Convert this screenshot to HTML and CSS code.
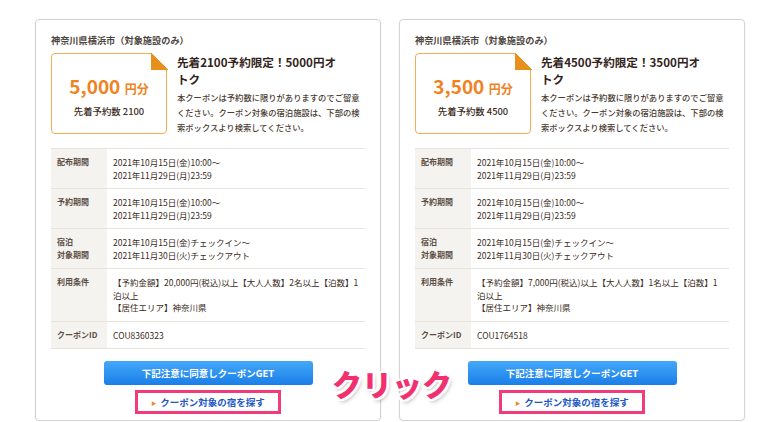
FILE: index.html
```html
<!DOCTYPE html>
<html lang="ja">
<head>
    <meta charset="UTF-8">
    <meta name="viewport" content="width=device-width, initial-scale=1.0">
    <title>クーポン</title>
    <link rel="stylesheet" href="styles.css">
</head>
<body>

    <div class="coupon-list">
        <div class="coupon-card">
            <h3 class="area">神奈川県横浜市（対象施設のみ）</h3>
            <div class="coupon-head">
                <div class="ticket">
                    <p class="amount">5,000 <span>円分</span></p>
                    <p class="limit">先着予約数 2100</p>
                </div>
                <div class="summary">
                    <h2 class="title">先着2100予約限定！5000円オトク</h2>
                    <p class="note">本クーポンは予約数に限りがありますのでご留意ください。クーポン対象の宿泊施設は、下部の検索ボックスより検索してください。</p>
                </div>
            </div>
            <table class="detail">
                <tr>
                    <th>配布期間</th>
                    <td>2021年10月15日(金)10:00〜<br>2021年11月29日(月)23:59</td>
                </tr>
                <tr>
                    <th>予約期間</th>
                    <td>2021年10月15日(金)10:00〜<br>2021年11月29日(月)23:59</td>
                </tr>
                <tr>
                    <th>宿泊<br>対象期間</th>
                    <td>2021年10月15日(金)チェックイン〜<br>2021年11月30日(火)チェックアウト</td>
                </tr>
                <tr>
                    <th>利用条件</th>
                    <td>【予約金額】20,000円(税込)以上【大人人数】2名以上【泊数】1泊以上<br>【居住エリア】神奈川県</td>
                </tr>
                <tr>
                    <th>クーポンID</th>
                    <td>COU8360323</td>
                </tr>
            </table>
            <button class="get-btn" type="button">下記注意に同意しクーポンGET</button>
            <a class="search-link" href="#"><span class="arrow">▶</span>クーポン対象の宿を探す</a>
        </div>

        <div class="coupon-card">
            <h3 class="area">神奈川県横浜市（対象施設のみ）</h3>
            <div class="coupon-head">
                <div class="ticket">
                    <p class="amount">3,500 <span>円分</span></p>
                    <p class="limit">先着予約数 4500</p>
                </div>
                <div class="summary">
                    <h2 class="title">先着4500予約限定！3500円オトク</h2>
                    <p class="note">本クーポンは予約数に限りがありますのでご留意ください。クーポン対象の宿泊施設は、下部の検索ボックスより検索してください。</p>
                </div>
            </div>
            <table class="detail">
                <tr>
                    <th>配布期間</th>
                    <td>2021年10月15日(金)10:00〜<br>2021年11月29日(月)23:59</td>
                </tr>
                <tr>
                    <th>予約期間</th>
                    <td>2021年10月15日(金)10:00〜<br>2021年11月29日(月)23:59</td>
                </tr>
                <tr>
                    <th>宿泊<br>対象期間</th>
                    <td>2021年10月15日(金)チェックイン〜<br>2021年11月30日(火)チェックアウト</td>
                </tr>
                <tr>
                    <th>利用条件</th>
                    <td>【予約金額】7,000円(税込)以上【大人人数】1名以上【泊数】1泊以上<br>【居住エリア】神奈川県</td>
                </tr>
                <tr>
                    <th>クーポンID</th>
                    <td>COU1764518</td>
                </tr>
            </table>
            <button class="get-btn" type="button">下記注意に同意しクーポンGET</button>
            <a class="search-link" href="#"><span class="arrow">▶</span>クーポン対象の宿を探す</a>
        </div>
    </div>

    <!-- annotation -->
    <p class="click-label">クリック</p>

</body>
</html>
```

FILE: styles.css
```css
body {
    font-family: "Noto Sans CJK JP", "Noto Sans", sans-serif;
    background-color: #fff;
    color: #3a2b22;
    margin: 0;
}

p, h2, h3 {
    margin: 0;
}

.coupon-list {
    display: flex;
    gap: 18px;
    padding: 19px 0 0 35px;
}

.coupon-card {
    box-sizing: border-box;
    width: 346px;
    border: 1px solid #d2d2d2;
    border-radius: 4px;
    box-shadow: 0 1px 2px rgba(0, 0, 0, 0.08);
    padding: 13px 15px 6px;
    display: flex;
    flex-direction: column;
    align-items: center;
}

.area {
    align-self: stretch;
    font-size: 9.2px;
    line-height: 14px;
    font-weight: bold;
    color: #4d4540;
}

.coupon-head {
    align-self: stretch;
    display: flex;
    gap: 10px;
    margin-top: 6px;
}

/* ticket with folded corner */
.ticket {
    position: relative;
    box-sizing: border-box;
    width: 116px;
    height: 81px;
    flex-shrink: 0;
    border: 1.5px solid #f6ab55;
    border-radius: 4px;
    display: flex;
    flex-direction: column;
    justify-content: center;
    align-items: center;
    padding-top: 6px;
}

.ticket::after {
    content: "";
    position: absolute;
    top: -2px;
    right: -2px;
    width: 17px;
    height: 18px;
    background: linear-gradient(to bottom left, #fff 50%, #e8901c 50%);
}

.amount {
    font-size: 19px;
    line-height: 22px;
    font-weight: bold;
    color: #f08220;
}

.amount span {
    font-size: 12px;
}

.limit {
    font-size: 9.4px;
    line-height: 14px;
    margin-top: 4px;
    font-weight: 500;
    color: #3a2b22;
}

.summary {
    width: 188px;
}

.title {
    width: 163px;
    font-size: 11.6px;
    line-height: 17px;
    font-weight: bold;
    margin-top: 1px;
    color: #33241b;
}

.note {
    font-size: 8.3px;
    line-height: 15px;
    margin-top: 2px;
    font-weight: 500;
    color: #4a3c33;
}

.detail {
    align-self: stretch;
    border-collapse: collapse;
    margin-top: 13px;
    font-size: 8.5px;
    line-height: 12.5px;
    border-top: 1px solid #e7e3dd;
    border-bottom: 1px solid #e7e3dd;
}

.detail tr + tr {
    border-top: 1px solid #e7e3dd;
}

.detail th,
.detail td {
    padding: 7px 6px;
    vertical-align: top;
    text-align: left;
}

.detail th {
    width: 44px;
    background-color: #f5f3ef;
    font-size: 8px;
    font-weight: bold;
    color: #5a4d44;
}

.get-btn {
    width: 209px;
    height: 24px;
    margin-top: 12px;
    border: none;
    border-radius: 3px;
    background: linear-gradient(#43a8f8, #1a7ee8);
    color: #fff;
    font-family: inherit;
    font-size: 9.5px;
    font-weight: bold;
    cursor: pointer;
}

.search-link {
    box-sizing: border-box;
    width: 146px;
    height: 24px;
    margin-top: 5px;
    border: 3px solid #f03c7c;
    display: flex;
    align-items: center;
    justify-content: center;
    gap: 4px;
    font-size: 9.5px;
    font-weight: bold;
    color: #2358c9;
    text-decoration: none;
}

.arrow {
    font-size: 5px;
    color: #f08a1c;
}

.click-label {
    position: absolute;
    left: 332px;
    top: 365px;
    font-size: 30px;
    line-height: 36px;
    font-weight: 900;
    color: #f2306f;
    text-shadow:
        2px 0 0 #fff, -2px 0 0 #fff, 0 2px 0 #fff, 0 -2px 0 #fff,
        2px 2px 0 #fff, -2px -2px 0 #fff, 2px -2px 0 #fff, -2px 2px 0 #fff,
        2px 3px 4px rgba(0, 0, 0, 0.3);
}
```
